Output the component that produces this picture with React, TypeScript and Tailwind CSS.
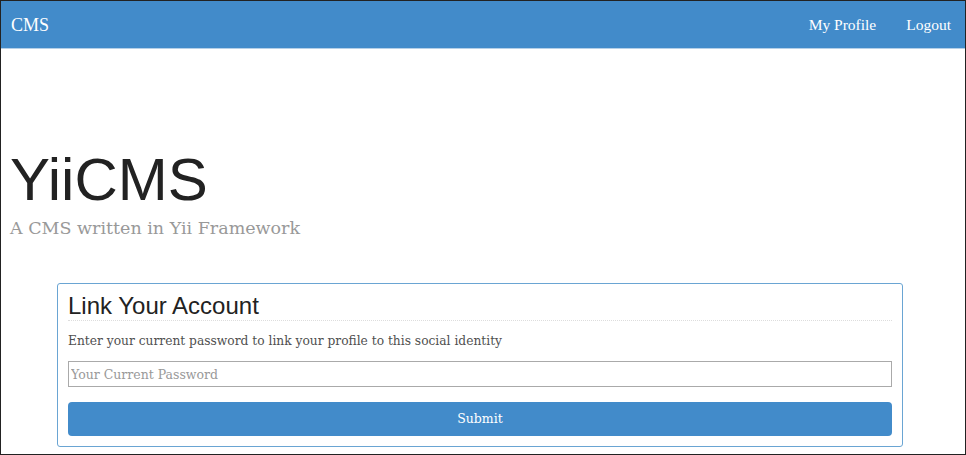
export default function App() {
  return (
    <div className="w-[966px] h-[455px] box-border border border-[#222] overflow-hidden bg-white font-['Liberation_Serif',serif]">
      <nav className="h-[48px] bg-[#428bca] border-b border-[#b5d0e8] flex items-center justify-between pl-[10px] pr-[14px] text-white">
        <span className="text-[18px] leading-none">CMS</span>
        <div className="flex items-center gap-[30px] text-[15.5px] leading-none">
          <span>My Profile</span>
          <span>Logout</span>
        </div>
      </nav>
      <div className="pl-[9px]">
        <h1 className="mt-[101px] text-[60px] leading-[60px] text-[#222] font-['Liberation_Sans',sans-serif]">YiiCMS</h1>
        <p className="mt-[4px] text-[17.5px] leading-[28px] text-[#999] font-['DejaVu_Serif',serif]">A CMS written in Yii Framework</p>
      </div>
      <div className="mt-[41px] ml-[56px] w-[846px] border border-[#6aa5d3] rounded-[3px] pt-[7px] pb-[10px] px-[10px]">
        <h2 className="text-[24px] leading-[29px] text-[#222] font-['Liberation_Sans',sans-serif] border-b border-dotted border-[#ddd]">Link Your Account</h2>
        <p className="mt-[10px] text-[12.25px] leading-[20px] text-[#4f4f4f] font-['DejaVu_Serif',serif]">Enter your current password to link your profile to this social identity</p>
        <input
          type="password"
          placeholder="Your Current Password"
          className="mt-[10px] block w-full h-[26px] border border-[#aaa] px-[2px] text-[12.5px] placeholder:text-[#999] outline-none font-['DejaVu_Serif',serif]"
        />
        <button className="mt-[15px] w-full h-[34px] rounded-[4px] bg-[#428bca] text-white text-[12.5px] flex items-center justify-center font-['DejaVu_Serif',serif]">
          Submit
        </button>
      </div>
    </div>
  );
}
